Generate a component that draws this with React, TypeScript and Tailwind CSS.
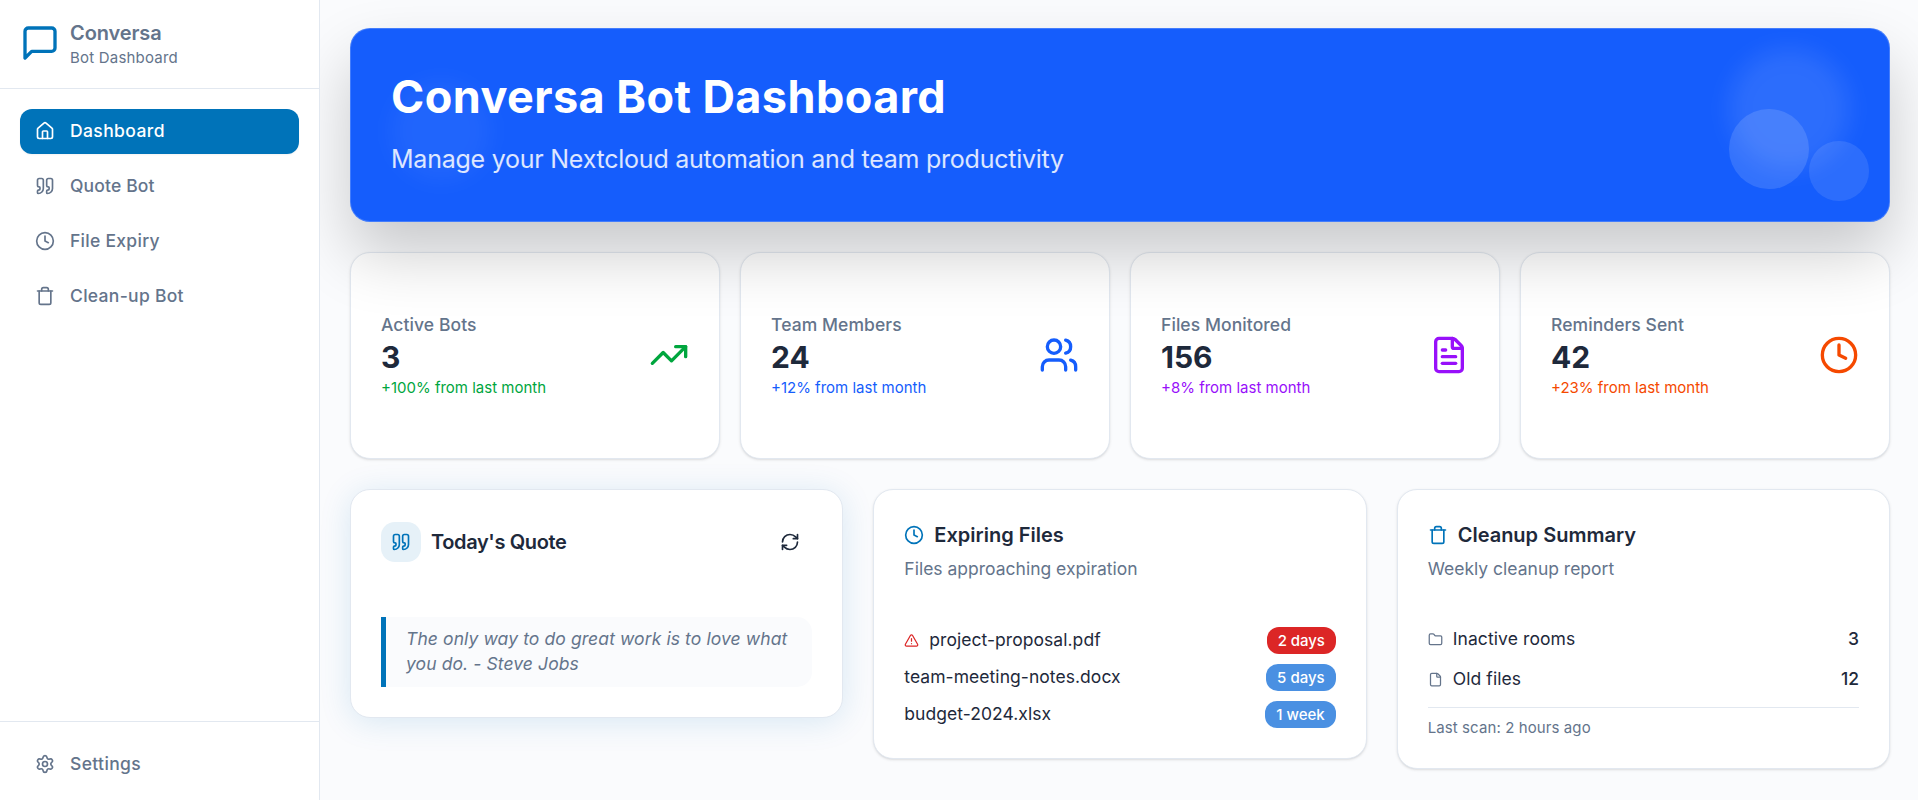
import React from "react";
import {
  Clock,
  File,
  FileText,
  Folder,
  House,
  Quote,
  RefreshCw,
  Settings,
  Trash,
  TrendingUp,
  TriangleAlert,
  Users,
} from "lucide-react";

function MessageIcon() {
  return (
    <svg
      viewBox="0 0 24 24"
      fill="none"
      stroke="currentColor"
      strokeWidth="2"
      strokeLinecap="round"
      strokeLinejoin="round"
      className="size-10 shrink-0 text-[#0073b9]"
    >
      <path d="M21 15a2 2 0 0 1-2 2H7l-4 4V5a2 2 0 0 1 2-2h14a2 2 0 0 1 2 2z" />
    </svg>
  );
}

const nav = [
  { label: "Dashboard", icon: House, active: true, tracking: "tracking-[0.4px]" },
  { label: "Quote Bot", icon: Quote, active: false, tracking: "tracking-[0.15px]" },
  { label: "File Expiry", icon: Clock, active: false, tracking: "tracking-[0.28px]" },
  { label: "Clean-up Bot", icon: Trash, active: false, tracking: "tracking-[0.3px]" },
];

const stats = [
  { label: "Active Bots", value: "3", change: "+100% from last month", icon: TrendingUp, color: "text-[#00a63e]" },
  { label: "Team Members", value: "24", change: "+12% from last month", icon: Users, color: "text-[#155dfc]" },
  { label: "Files Monitored", value: "156", change: "+8% from last month", icon: FileText, color: "text-[#9810fa]" },
  { label: "Reminders Sent", value: "42", change: "+23% from last month", icon: Clock, color: "text-[#f54900]" },
];

const files = [
  { name: "project-proposal.pdf", due: "2 days", urgent: true },
  { name: "team-meeting-notes.docx", due: "5 days", urgent: false },
  { name: "budget-2024.xlsx", due: "1 week", urgent: false },
];

const cleanup = [
  { label: "Inactive rooms", count: "3", icon: Folder },
  { label: "Old files", count: "12", icon: File },
];

const card =
  "rounded-[20px] border border-[#e2e8f0] bg-white shadow-[0_1px_3px_0_rgba(0,0,0,0.1),0_1px_2px_-1px_rgba(0,0,0,0.1)]";

function NavItem({
  label,
  icon: Icon,
  active,
  tracking,
}: {
  label: string;
  icon: React.ElementType;
  active?: boolean;
  tracking: string;
}) {
  return (
    <a
      className={`flex h-[45px] items-center gap-[15px] rounded-[12px] px-[15px] text-[17.5px] font-medium ${tracking} ${
        active ? "bg-[#0073b9] text-white shadow-[0_1px_2px_rgba(0,0,0,0.05)]" : "text-[#64748b]"
      }`}
    >
      <Icon className="mb-px size-5 shrink-0" />
      <span>{label}</span>
    </a>
  );
}

function Sidebar() {
  return (
    <aside className="relative z-10 flex w-80 shrink-0 flex-col border-r border-[#e2e8f0] bg-white">
      <div className="flex h-[89px] items-center gap-2.5 border-b border-[#e2e8f0] px-5 pb-0.5">
        <MessageIcon />
        <div>
          <div className="text-[20px] leading-7 font-semibold tracking-[-0.1px] text-[#64748b]">Conversa</div>
          <div className="-mb-px pt-px text-[15px] leading-5 tracking-[0.2px] text-[#64748b]">Bot Dashboard</div>
        </div>
      </div>
      <nav className="flex flex-1 flex-col gap-2.5 p-5">
        {nav.map((n) => (
          <NavItem key={n.label} {...n} />
        ))}
      </nav>
      <div className="h-[79px] border-t border-[#e2e8f0] px-5 pt-5">
        <NavItem label="Settings" icon={Settings} tracking="tracking-[0.35px]" />
      </div>
    </aside>
  );
}

function Hero() {
  return (
    <section className="relative h-[194px] shrink-0 rounded-[20px] border border-white/20 bg-[#155dfc] px-10 pt-10 shadow-[0_32px_64px_rgba(0,0,0,0.2)]">
      <div className="absolute top-[20px] right-[40px] size-[120px] rounded-full bg-white/10 blur-[12px]" />
      <div className="absolute top-[52px] left-[40px] size-[100px] rounded-full bg-white/5 blur-[12px]" />
      <div className="absolute top-[80px] right-[80px] size-[80px] rounded-full bg-white/[0.13]" />
      <div className="absolute top-[112px] right-[20px] size-[60px] rounded-full bg-white/10" />
      <h1 className="relative text-[45px] leading-[56px] font-bold tracking-[0.42px] text-white">
        Conversa Bot Dashboard
      </h1>
      <p className="relative mt-[17px] text-[25px] leading-[35px] tracking-[-0.24px] text-white/85">
        Manage your Nextcloud automation and team productivity
      </p>
    </section>
  );
}

function QuoteCard() {
  return (
    <section className="rounded-[20px] border border-[#e2e8f0] bg-white px-[30px] pt-8 pb-[30px] shadow-[0_4px_32px_rgba(0,115,185,0.14)]">
      <div className="flex items-center gap-2.5">
        <div className="grid size-10 place-items-center rounded-[14px] bg-[#e6f1f8] text-[#0073b9]">
          <Quote className="size-5" />
        </div>
        <h2 className="text-[20px] leading-[30px] font-semibold tracking-[-0.37px] text-[#1e293b]">Today's Quote</h2>
        <RefreshCw className="mr-3 ml-auto size-5 text-[#1e293b]" />
      </div>
      <blockquote className="mt-[55px] rounded-r-[15px] border-l-[5px] border-[#0073b9] bg-[#fafbfd] px-5 pt-[9px] pb-[11px] text-[17.5px] leading-[25px] tracking-[0.1px] text-[#64748b] italic">
        The only way to do great work is to love what
        <br />
        you do. - Steve Jobs
      </blockquote>
    </section>
  );
}

function CardHeading({ icon: Icon, title, sub }: { icon: React.ElementType; title: string; sub: string }) {
  return (
    <div>
      <div className="flex items-center gap-2.5">
        <Icon className="size-5 text-[#0073b9]" />
        <h2 className="text-[20px] leading-[30px] font-semibold text-[#1e293b]">{title}</h2>
      </div>
      <p className="mt-[6px] text-[17.5px] leading-[25px] text-[#64748b]">{sub}</p>
    </div>
  );
}

export default function App() {
  return (
    <div className="flex h-[800px] w-full overflow-hidden bg-[#fafbfd] font-['Inter',sans-serif]">
      <Sidebar />
      <main className="flex min-w-0 flex-1 flex-col gap-[30px] px-[30px] pt-7 pr-7">
        <Hero />
        <div className="grid shrink-0 grid-cols-4 gap-5">
          {stats.map(({ label, value, change, icon: Icon, color }) => (
            <section key={label} className={`${card} flex h-[207px] items-center justify-between px-[30px]`}>
              <div className="pb-0.5">
                <div className="text-[17.5px] leading-[25px] font-medium tracking-[0.08px] text-[#64748b]">{label}</div>
                <div className="text-[30px] leading-[40px] font-bold text-[#1e293b]">{value}</div>
                <div className={`mt-px text-[15px] leading-5 ${color}`}>{change}</div>
              </div>
              <Icon className={`mb-0.5 size-10 ${color}`} />
            </section>
          ))}
        </div>
        <div className="grid shrink-0 grid-cols-3 items-start gap-[30px]">
          <QuoteCard />
          <section className={`${card} p-[30px]`}>
            <CardHeading icon={Clock} title="Expiring Files" sub="Files approaching expiration" />
            <div className="mt-[46px] flex flex-col gap-2.5">
              {files.map((f) => (
                <div key={f.name} className="flex h-[27px] items-center justify-between">
                  <div className="flex items-center gap-2.5">
                    {f.urgent && <TriangleAlert className="size-[15px] text-[#dc2626]" />}
                    <span className="pb-0.5 text-[17.5px] leading-[23px] tracking-[0.05px] text-[#1e293b]">{f.name}</span>
                  </div>
                  <span
                    className={`rounded-[12px] px-[11px] py-[3.5px] text-[15px] leading-5 font-medium text-white ${
                      f.urgent ? "bg-[#dc2626] tracking-[-0.1px]" : "bg-[#4a90e2]"
                    }`}
                  >
                    {f.due}
                  </span>
                </div>
              ))}
            </div>
          </section>
          <section className={`${card} p-[30px]`}>
            <CardHeading icon={Trash} title="Cleanup Summary" sub="Weekly cleanup report" />
            <div className="mt-[46px] flex flex-col gap-[15px]">
              {cleanup.map(({ label, count, icon: Icon }) => (
                <div key={label} className="flex h-[25px] items-center gap-2.5 text-[17.5px] leading-[23px] text-[#1e293b]">
                  <Icon className="size-[15px] text-[#64748b]" />
                  <span className="pb-0.5 tracking-[0.1px]">{label}</span>
                  <span className="ml-auto pb-0.5 font-medium">{count}</span>
                </div>
              ))}
              <div className="border-t border-[#e2e8f0] pt-2.5 text-[15px] leading-5 tracking-[0.1px] text-[#64748b]">
                Last scan: 2 hours ago
              </div>
            </div>
          </section>
        </div>
      </main>
    </div>
  );
}
